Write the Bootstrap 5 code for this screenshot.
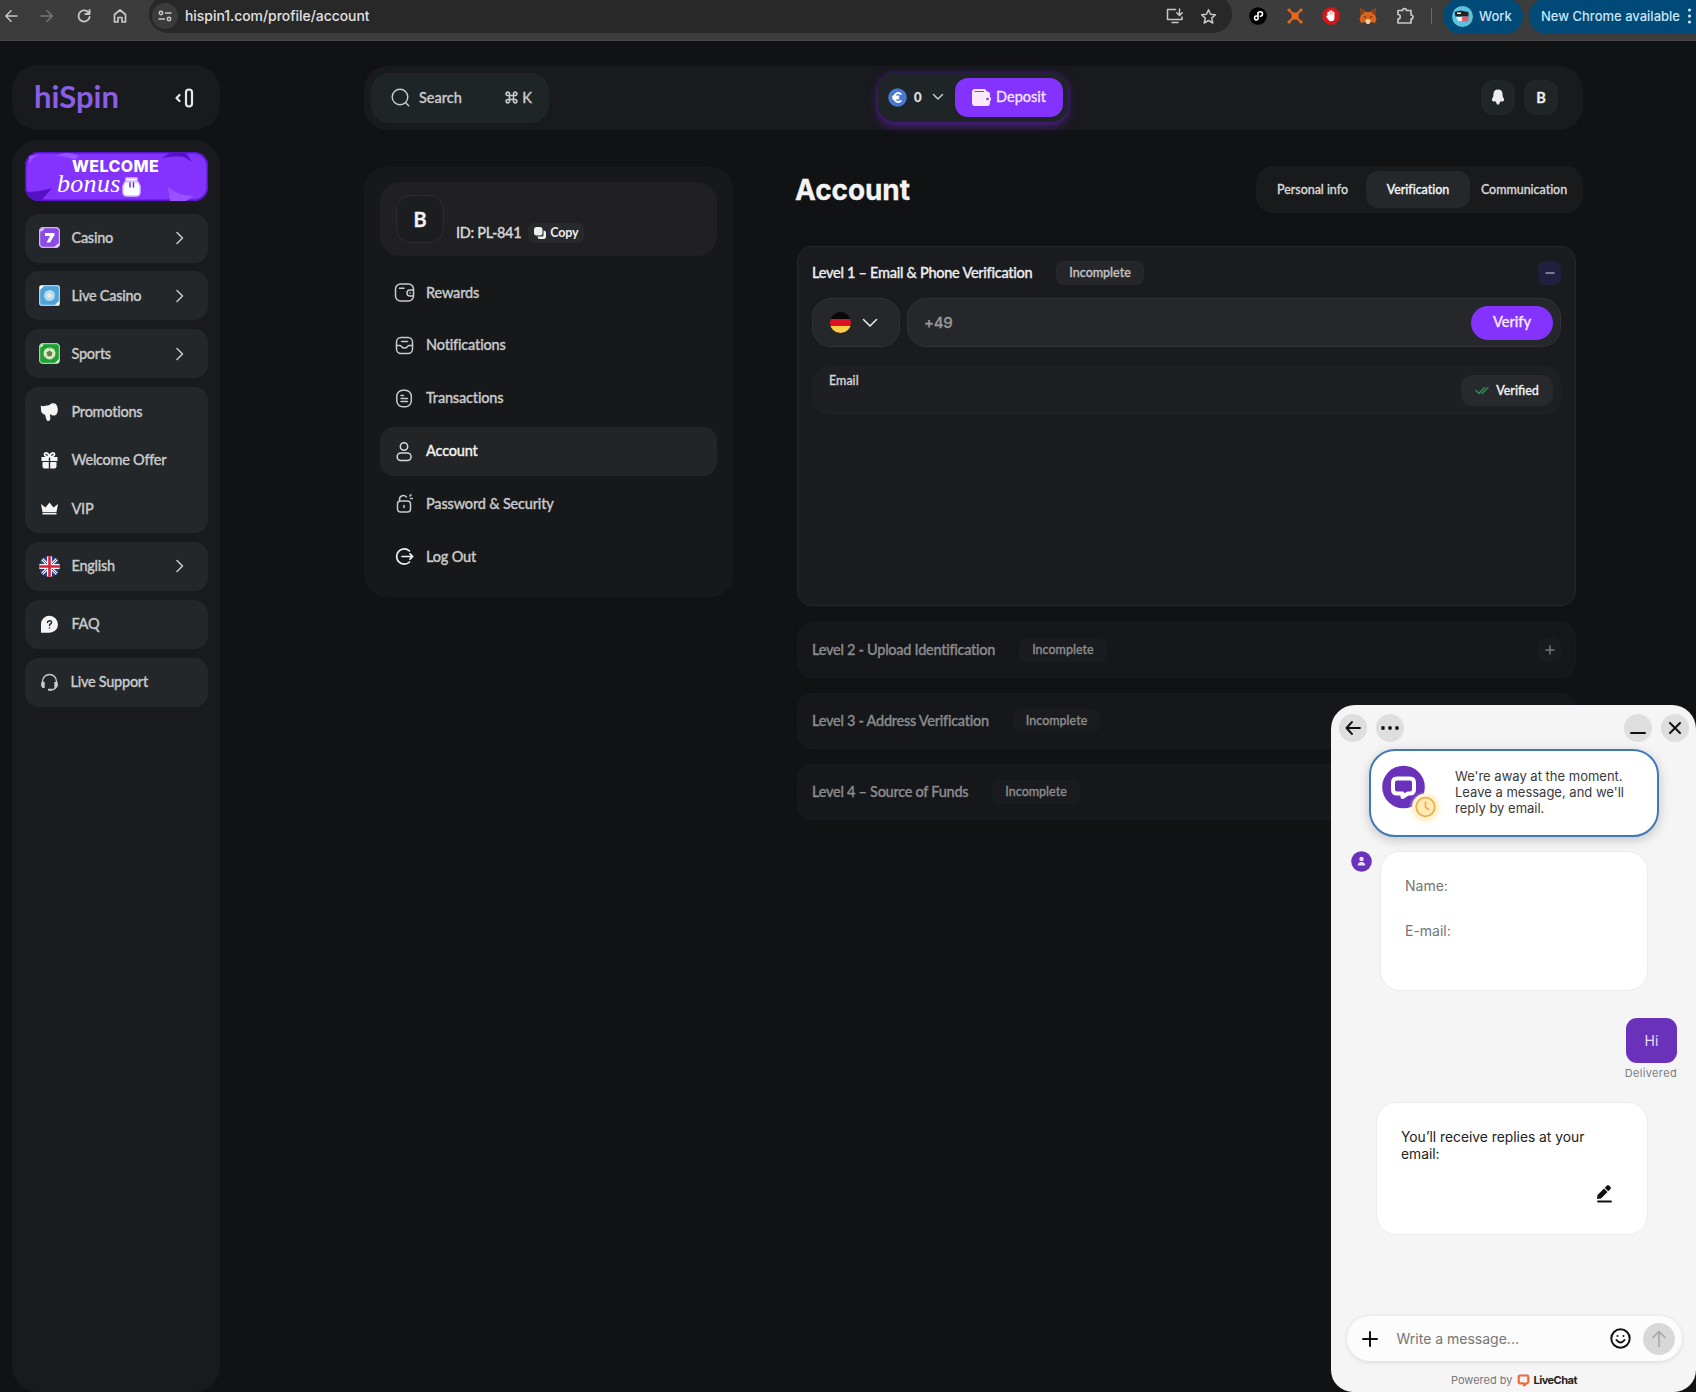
<!DOCTYPE html>
<html lang="en">
<head>
<meta charset="utf-8">
<title>hiSpin – Account</title>
<meta name="viewport" content="width=device-width, initial-scale=1">
<link href="https://cdn.jsdelivr.net/npm/bootstrap@5.3.0/dist/css/bootstrap.min.css" rel="stylesheet">
<style>
body{background:#101214;color:#c9cacb;font-family:Lato,"Noto Sans",sans-serif;font-size:14.5px;line-height:20px;font-weight:500;width:1696px;height:1392px;overflow:hidden;position:relative}
.side,main{letter-spacing:-.27px;-webkit-text-stroke:.3px}
svg{display:block;flex:none;fill:none;stroke-linecap:round;stroke-linejoin:round}
svg:not([stroke]){stroke:currentColor}
svg:not([stroke-width]){stroke-width:1.5}
svg .f{fill:currentColor;stroke:none}
/* browser bar */
.chrome{height:41px;background:#3c3c3c;border-bottom:1px solid #474747;font-family:Inter,sans-serif;font-size:13.9px;color:#c7c7c7;overflow:hidden;padding-bottom:8px}
.omni{width:1083px;height:38px;margin-top:-5px;padding-top:5px;background:#282828;border-radius:19px;margin-left:11px}
.site{width:26px;height:26px;border-radius:50%;background:#3b3b3b;margin-left:4px;display:grid;place-items:center}
.nav-ico{width:36.5px;display:grid;place-items:center}
.cpill{background:#004a77;color:#c9e6fb;height:36px;border-radius:18px;font-weight:500;font-size:13px}
/* side bar */
.side{width:208px;margin-left:12px}
.logo-box{height:65px;border-radius:26px;background:#191a1e;padding:0 26px 0 22px}
.logo-txt{font-size:31px;font-weight:700;letter-spacing:0;color:#8b5ee6;line-height:40px;padding-bottom:4px;-webkit-text-stroke:0}
.side-body{height:1252px;margin-top:10px;border-radius:26px;background:#191a1e;padding:12px 12px 0 13px}
.promo{height:49px;border-radius:14px;background:#8433ff;position:relative;overflow:hidden;box-shadow:inset 0 0 0 1.5px #5b11d0;margin-bottom:12.5px;-webkit-text-stroke:0}
.promo svg{position:absolute;left:0;top:0}
.promo b{position:absolute;left:47px;top:6px;color:#fff;font:800 16px/16px Inter,sans-serif;letter-spacing:.4px}
.promo i{position:absolute;left:32px;top:20px;color:#fff;font:italic 26px/24px "Liberation Serif",serif;letter-spacing:.3px}
.sitem{height:49px;background:#23272a;border-radius:14px;margin-bottom:8.9px;padding-left:13.5px}
.sitem.multi{height:146px}
.srow{height:48.7px;display:flex;align-items:center}
.srow svg:first-child{margin-right:12px;width:21px;height:21px;color:#f4f4f4}
.srow .chev{margin-left:auto;margin-right:24.5px}
/* header */
.topbar{width:1219px;height:64px;border-radius:24px;background:#191a1e;padding:0 25px 1px 7px;margin-top:25px;letter-spacing:0}
.search{width:178px;height:50px;border-radius:18px;background:#1f2427;padding:0 17px 0 20px}
.wallet{width:190px;height:49px;border-radius:17px;background:#1f2427;padding:0 5px 1px 10px;margin-left:329px;box-shadow:0 4px 9px 1px #552099aa,0 0 4px #3a1a70}
.deposit{width:108px;height:39px;border-radius:13px;background:#8433ff;color:#f6e9ff;padding:0}
.deposit:hover{background:#8433ff;color:#f6e9ff}
.sq{width:34px;height:35px;border-radius:12px;background:#202528;color:#eceded;font-weight:700;display:grid;place-items:center}
/* profile column */
.prof{width:369px;height:430px;background:#17181a;border-radius:22px;padding:15px 16px;margin-top:37px;letter-spacing:-.18px}
.who{height:74px;border-radius:20px;background:#202022;padding:0 16px;margin-bottom:12px}
.ava{width:48px;height:48px;border:1px solid #2d2e30;border-radius:15px;background:#1c1d1f;color:#f1f1f1;font:700 20px/1 Lato,sans-serif;display:grid;place-items:center}
.copy{height:20px;border-radius:6px;background:#28292b;color:#eee;font-size:12.5px;font-weight:700;padding:0 6px;margin-left:7px;-webkit-text-stroke:0}
.mi{height:49px;margin-bottom:3.85px;border-radius:14px;padding-left:14px}
.mi svg{width:21px;height:21px;margin-right:11px}
.mi.on{background:#232426;color:#f1f1f1}
/* account column */
.acct{width:787px;margin-left:63px;margin-top:36px}
.ttl{font:700 28px/34px Inter,sans-serif;color:#f3f3f4;letter-spacing:-.1px;margin:0}
.tabs{width:327px;height:47px;border-radius:17px;background:#181a1c;font-size:12.5px;color:#d6d6d7;letter-spacing:-.05px}
.tabs .on{width:104px;height:37px;border-radius:12px;background:#24282b;color:#f4f4f4;display:grid;place-items:center;margin:0 11px 0 18px}
.lvl{width:779px;height:56px;border:1px solid #191a1c;border-radius:15px;background:#15171a;margin:0 0 15px 1px;padding:0 14px;color:#8b8c8d}
.lvl.open{height:360px;background:#1a1b1f;border-color:#26272b;color:#eee;margin:33px 0 16px 1px}
.lhead{height:54px}
.tag{font-size:12.5px;height:24px;border-radius:7px;background:#1a1b1e;padding:0 13px;margin-left:24px;display:grid;place-items:center;letter-spacing:0}
.open .tag{background:#25262a;color:#c2c3c4}
.pm{width:23px;height:24px;border-radius:7px;display:grid;place-items:center;margin-left:auto;color:#77787a;background:#1a1b1e}
.open .pm{background:#201f3d;color:#9a96c6}
.fld{height:49px;border-radius:19px;background:#26272a;border:1px solid #303134}
.verify{width:82px;height:34px;border-radius:17px;background:#8433ff;color:#fae8ff;font:500 14.5px/1 Lato,sans-serif;padding:0}
.mail{height:49px;border-radius:16px;background:#1e1f22;margin-top:19px;padding:0 8px 0 17px}
.okk{width:92px;height:31px;border-radius:11px;background:#28292c;color:#f2f2f2;font-size:12.5px;letter-spacing:0}
/* chat window */
.chat{position:absolute;left:1331px;top:705px;width:365px;height:687px;border-radius:24px 24px 22px 22px;background:#f5f5f6;font-family:Inter,sans-serif;font-weight:400;color:#222;padding:9px 7px 0 8px;font-size:14px}
.rnd{width:28px;height:28px;border-radius:50%;background:#dedede;color:#111;display:grid;place-items:center}
.away{width:290px;height:88px;margin:7px 0 0 30px;border:2px solid #4079b8;border-radius:26px;background:#fff;box-shadow:0 3px 12px #0003;font-size:13px;line-height:15.8px;color:#3a3a3a;padding-left:11px}
.wcard{background:#fff;border-radius:20px;border:1px solid #ececec}
.hi{width:51px;height:45px;border-radius:11px;background:#6a32bb;color:#e9dcfb;display:grid;place-items:center}
.compose{width:335px;height:45px;border-radius:23px;background:#fcfcfc;box-shadow:0 1px 5px #0000001f;color:#757575;margin-left:7.5px;padding:0 7px 0 15px}
</style>
</head>
<body>
<div class="chrome d-flex align-items-center">
  <div class="nav-ico" style="width:22px"><svg width="16" height="16" viewBox="0 0 16 16"><path d="M14 8H3M8 2.8 2.8 8 8 13.2"/></svg></div>
  <div class="nav-ico ms-1" style="color:#777;width:41px"><svg width="16" height="16" viewBox="0 0 16 16"><path d="M2 8h11M8 2.8 13.2 8 8 13.2"/></svg></div>
  <div class="nav-ico" style="width:34px"><svg width="16" height="16" viewBox="0 0 16 16" stroke-width="1.800"><path d="M13 5.2A5.600 5.600 0 1 0 13.600 9M13.600 2v4H9.400"/></svg></div>
  <div class="nav-ico" style="width:37px"><svg width="16" height="16" viewBox="0 0 16 16" stroke-width="1.700"><path d="M2.500 14V6.500L8 2l5.500 4.500V14H10V9.500H6V14z"/></svg></div>
  <div class="omni d-flex align-items-center">
    <div class="site" style="margin-left:3px"><svg width="14" height="14" viewBox="0 0 14 14"><circle cx="3" cy="4" r="1.700"/><path d="M7.500 4H13M1 10h5.500"/><circle cx="11" cy="10" r="1.700"/></svg></div>
    <span style="color:#e2e2e2;margin-left:7px">hispin1.com/profile/account</span>
    <svg class="ms-auto" width="18" height="16" viewBox="0 0 18 16"><path d="M9.500 1.500H1.500v10h14.500V9M6 14.500h6M13.500 1v6M10.800 4.800l2.700 2.700 2.700-2.700"/></svg>
    <svg style="margin:0 15px 0 16px" width="17" height="17" viewBox="0 0 17 17"><path d="m8.500 1.800 2 4.500 4.900.5-3.700 3.300 1.100 4.900-4.300-2.500-4.300 2.500 1.100-4.900L1.600 6.800l4.900-.5z"/></svg>
  </div>
  <svg style="margin-left:17px" width="18" height="18" viewBox="0 0 18 18" stroke="none"><circle cx="9" cy="9" r="8.800" fill="#000"/><path stroke="#fff" stroke-width="1.600" d="M6.800 13a2.200 2.200 0 0 1 0-4H8.500M9 5.500v5.800Q9 13 7 13M9 7Q9 4.800 11.300 4.800T13.500 7t-2.200 2.200"/></svg>
  <svg style="margin-left:20px" width="16" height="16" viewBox="0 0 16 16" color="#e8691b"><path class="f" d="M4.500 4.500h7v7h-7z"/><path stroke-width="2" d="M5 5 2 2M11 5l3-3M5 11l-3 3M11 11l3 3"/><path stroke-width="3.200" d="M2 2h.1M14 2h.1M2 14h.1M14 14h.1"/></svg>
  <svg style="margin-left:19px" width="18" height="18" viewBox="0 0 18 18" stroke="none"><path fill="#d3181b" d="M5.500 .5h7l5 5v7l-5 5h-7l-5-5v-7z"/><path stroke="#fff" stroke-width="1.500" fill="#fff" d="M6.200 9V5.500M8 8V4M9.900 8V4M11.700 9V5.500M6.200 8.500h5.500V11c0 1.500-1 2.500-2.700 2.500S6.500 12 5 9.500"/></svg>
  <svg style="margin-left:19px" width="18" height="18" viewBox="0 0 18 18" stroke="none"><path fill="#d9641c" d="m1 1 6 4h4l6-4-1 7 1.500 4-1.500 4-4-1-2 2H8l-2-2-4 1-1.500-4L2 8z"/><path fill="#8c3a12" d="m1 1 5 4-4 3zM17 1l-5 4 4 3z"/><path fill="#f5d0a6" d="m6 14 2-2h2l2 2-2 3H8z"/><path fill="#222" d="m4.500 9 3 1-1 1zM13.500 9l-3 1 1 1z"/></svg>
  <svg style="margin-left:19px" width="18" height="18" viewBox="0 0 18 18" stroke-width="1.700"><path d="M2 3.500h4.500a2 1.900 0 0 1 4 0H15V8a2 2 0 0 1 0 4v4H2v-4a2.200 2.200 0 0 0 0-4.500z"/></svg>
  <span style="width:1px;height:16px;background:#6b6b6b;margin:0 11px 0 17px"></span>
  <div class="cpill d-flex align-items-center" style="width:80px;padding-left:9px">
    <svg width="21" height="21" viewBox="0 0 21 21" stroke="none"><circle cx="10.500" cy="10.500" r="10.500" fill="#5cc3dd"/><path fill="#222" d="M2.500 6 8 4.500 16.500 6v4.500h-13z"/><path fill="#eee" d="M4 11h7l-1 4H6zM5 6.500h4V8H5z"/><path fill="#d86070" d="M10 10.500h7l-1 5h-6z"/></svg>
    <span style="margin-left:6px">Work</span></div>
  <div class="cpill d-flex align-items-center flex-fill text-nowrap" style="margin-left:6px;padding-left:12px;border-radius:18px 0 0 18px">New Chrome available
    <svg class="ms-auto" style="margin-right:4px" width="5" height="16" viewBox="0 0 5 16"><circle class="f" cx="2.500" cy="2" r="1.600"/><circle class="f" cx="2.500" cy="8" r="1.600"/><circle class="f" cx="2.500" cy="14" r="1.600"/></svg></div>
</div>

<div class="d-flex align-items-start">
  <aside class="side" style="margin-top:24px">
    <div class="logo-box d-flex align-items-center justify-content-between">
      <span class="logo-txt">hiSpin</span>
      <svg width="19" height="20" viewBox="0 0 19 20" stroke="#e8e8e8" stroke-width="2.200"><path d="M4.500 7 1.500 10l3 3"/><rect x="11" y="1.500" width="6" height="17" rx="3"/></svg>
    </div>
    <div class="side-body">
      <div class="promo"><svg width="183" height="49" viewBox="0 0 183 49" stroke="none"><path fill="#5512c4" d="M0 40q15 0 27-4L16 49H0zM137 6q10-8 24-5l6 9-8-5q-8-2-22 1z"/><path fill="#9a52ff" d="M30 4q12-6 24 0l-4 4q-8-4-20-4zM143 35q10 9 26 9l-8 5h-16zM4 12Q8 4 16 2L4 4z"/><path fill="#fff" stroke="#d9c0ff" d="M100 30h13l2 4v6q0 4-4 4h-9q-4 0-4-4v-6zM101 26h11v3h-11z"/><path stroke="#6a2bd0" stroke-width="1.500" d="M105 31v4M108.500 31v4"/></svg><b>WELCOME</b><i>bonus</i></div>
      <div class="sitem"><div class="srow"><svg viewBox="0 0 21 21" stroke="none"><rect x=".5" y=".5" width="20" height="20" rx="4" fill="#8a4be6" stroke="#d3b3f8"/><path d="M1.500 5V3q0-1.500 1.500-1.500h3zM20 16v2q0 2-2 2h-3z" fill="#e9d8ff"/><path d="M6 6h9.500v2l-4.500 7.500H7.500L11 9H6z" fill="#fff"/></svg>Casino<svg class="chev" width="8" height="14" viewBox="0 0 8 14"><path d="m1 1.500 5.500 5.500L1 12.500"/></svg></div></div>
      <div class="sitem"><div class="srow"><svg viewBox="0 0 21 21" stroke="none"><rect x=".5" y=".5" width="20" height="20" rx="3" fill="#4fa3da" stroke="#9fd2f2"/><path d="M1 5V1h4zM20 16v4h-4z" fill="#fff"/><circle cx="10.500" cy="10.500" r="5.500" fill="#b5daf0"/><circle cx="10.500" cy="10.500" r="2.500" fill="#f0e9d8"/></svg>Live Casino<svg class="chev" width="8" height="14" viewBox="0 0 8 14"><path d="m1 1.500 5.500 5.500L1 12.500"/></svg></div></div>
      <div class="sitem"><div class="srow"><svg viewBox="0 0 21 21" stroke="none"><rect x=".5" y=".5" width="20" height="20" rx="4" fill="#20a035" stroke="#8bdc97"/><path d="M1.500 5V1.500H5zM20 16v4h-4z" fill="#d9ffdf"/><circle cx="10.500" cy="10.500" r="6" fill="#d8ecc4"/><path d="m10.500 7.500 3 2.200-1.200 3.500H8.700L7.500 9.700z" fill="#6a7a45"/><path fill="#7cab6b" d="M9 4.700h3l-1.500 1.500zM5 13l2 1 .5 2zM16 13l-2 1-.5 2z"/></svg>Sports<svg class="chev" width="8" height="14" viewBox="0 0 8 14"><path d="m1 1.500 5.500 5.500L1 12.500"/></svg></div></div>
      <div class="sitem multi">
        <div class="srow"><svg viewBox="0 0 21 21"><path class="f" d="M8 4.500C11 4.500 11.500 2 14 2.200c3-.5 4.800 2.800 4.800 6.300S17.500 14.800 14.500 14.500c-1.500 0-2.300-1-3.500-1.300l.3 4.300a2 2 0 0 1-4 .8L6 13.500C3.500 13.500 2 11 2 9l-.2-4.500 2 .8z"/></svg>Promotions</div>
        <div class="srow"><svg viewBox="0 0 21 21"><path class="f" d="M2.500 7h7.300v4H2.500zM11.200 7h7.300v4h-7.300zM3.500 12h6.300v6.500H5.500a2 2 0 0 1-2-2zM11.200 12h6.300v4.500a2 2 0 0 1-2 2h-4.300z"/><path stroke-width="1.800" d="M10.500 6.500C8 7 5.500 6 5.500 4.200S9 2 10.500 6.500C12 2 15.500 2.400 15.500 4.200S13 7 10.500 6.500"/></svg>Welcome Offer</div>
        <div class="srow"><svg viewBox="0 0 21 21"><path class="f" d="m2 6 4.500 3.500 4-5 4 5L19 6l-1.500 8h-14zM3.500 14.800h14v1.700h-14z"/></svg>VIP</div>
      </div>
      <div class="sitem"><div class="srow"><svg viewBox="0 0 21 21" stroke="none"><clipPath id="uk"><circle cx="10.500" cy="10.500" r="10.500"/></clipPath><g clip-path="url(#uk)"><path fill="#263c8e" d="M0 0h21v21H0z"/><path stroke="#f1f1f8" stroke-width="3" d="m0 0 21 21M21 0 0 21"/><path stroke="#c8334c" stroke-width="1" d="m0 0 21 21M21 0 0 21"/><path stroke="#f4f4f8" stroke-width="5" d="M10.500 0v21M0 10.500h21"/><path stroke="#d5233d" stroke-width="2.600" d="M10.500 0v21M0 10.500h21"/></g></svg>English<svg class="chev" width="8" height="14" viewBox="0 0 8 14"><path d="m1 1.500 5.500 5.500L1 12.500"/></svg></div></div>
      <div class="sitem"><div class="srow"><svg viewBox="0 0 21 21"><path class="f" d="M2 18.800V10a8.500 8.500 0 1 1 8.500 8.800z"/><path stroke="#23272a" stroke-width="1.500" d="M8.500 8.500c.2-2.600 4.200-2.300 4 0-.1 1.400-2 1.500-2 3M10.500 14v.1"/></svg>FAQ</div></div>
      <div class="sitem"><div class="srow"><svg viewBox="0 0 21 21" style="color:#c9cacb;margin-right:11px"><path stroke-width="1.400" d="M3.500 11V9.500a7 7 0 0 1 14 0V13c0 3-2 4.500-5 4.700"/><path class="f" d="M2.500 10h3.200v6H4q-2-1-2-3.500zM18.500 10h-3.200v6H17q2-1 2-3.500zM9 16.700h4v2H9z"/></svg>Live Support</div></div>
    </div>
  </aside>

  <main style="margin-left:144px">
    <header class="topbar d-flex align-items-center">
      <div class="search d-flex align-items-center"><svg width="19" height="19" viewBox="0 0 19 19" stroke-width="1.400"><circle cx="9" cy="9" r="7.800"/><path d="m14.700 14.700 3 3"/></svg><span style="margin-left:9px">Search</span>
        <svg class="ms-auto" width="13" height="13" viewBox="0 0 13 13" stroke-width="1.600"><path d="M4.500 4.500h4v4h-4zM4.500 4.500H3a1.700 1.700 0 1 1 1.500-1.500zM8.500 4.500V3A1.700 1.700 0 1 1 10 4.500zM8.500 8.500H10A1.700 1.700 0 1 1 8.500 10zM4.500 8.500V10A1.700 1.700 0 1 1 3 8.500z"/></svg><span style="margin-left:4px">K</span></div>
      <div class="wallet d-flex align-items-center">
        <svg width="19" height="19" viewBox="0 0 19 19" stroke="none"><circle cx="9.500" cy="9.500" r="9.300" fill="#4779d2"/><path stroke="#fff" stroke-width="1.800" d="M12.800 6A4.300 4.300 0 1 0 12.800 13M5 8.500h5.500M5 10.500h5.500"/></svg>
        <span style="margin-left:7px;font-weight:700;font-size:13px;color:#e0e0e0">0</span>
        <svg style="margin-left:10px" width="12" height="8" viewBox="0 0 12 8"><path d="m1.500 1.500 4.500 4.500 4.500-4.500"/></svg>
        <button class="btn deposit d-flex align-items-center justify-content-center ms-auto border-0" style="font-size:14.500px"><svg width="19" height="17" viewBox="0 0 19 17" stroke="none"><path fill="#fbeaff" d="M0 3a3 3 0 0 1 3-3h9q2.500 0 2.500 2.500h.5q3 0 3 3v8.500a3 3 0 0 1-3 3H3a3 3 0 0 1-3-3z"/><path fill="#8433ff" d="M2.500 2h9.500v1H2.500z"/><circle cx="16.500" cy="10" r="2.500" fill="#fbeaff"/><circle cx="15.500" cy="10" r="1.300" fill="#8433ff"/></svg><span style="margin-left:5px">Deposit</span></button>
      </div>
      <div class="sq ms-auto"><svg width="14" height="17" viewBox="0 0 14 17"><path class="f" d="M7 .5c3 0 4.500 2 4.500 4.500 0 2 .3 3 1.300 4.500.8 1.500.2 3-1.800 3H9.200L8 15.500H6l-1.200-3H3c-2 0-2.600-1.500-1.800-3C2.200 8 2.500 7 2.500 5 2.500 2.500 4 .5 7 .5z"/></svg></div>
      <div class="sq" style="margin-left:9px">B</div>
    </header>

    <div class="d-flex align-items-start">
      <section class="prof">
        <div class="who d-flex align-items-center"><div class="ava">B</div>
          <div class="d-flex align-items-center" style="margin:28px 0 0 12px;color:#d7d7d8"><span style="letter-spacing:-.3px">ID: PL-841</span>
            <span class="copy d-flex align-items-center"><svg width="12" height="12" viewBox="0 0 12 12"><rect class="f" width="8.500" height="8.500" rx="2.500"/><path class="f" d="M9.500 3.500q2.500 0 2.500 2.300V9.500q0 2.500-2.500 2.500H6q-2.500 0-2.500-2.500H8q1.500 0 1.500-1.500z"/></svg><span class="ms-1">Copy</span></span></div></div>
        <div class="mi d-flex align-items-center"><svg viewBox="0 0 21 21"><rect x="1.500" y="2" width="18" height="17" rx="5"/><path d="M5.500 6.200H10M19.500 8H16a3 3 0 0 0 0 6h3.500M16 11h.2"/></svg>Rewards</div>
        <div class="mi d-flex align-items-center"><svg viewBox="0 0 21 21"><rect x="2.500" y="2.500" width="16" height="16" rx="4.500"/><path d="M2.500 10.500H6c1.500 0 1.500 2.500 4.500 2.500s3-2.500 4.500-2.500h3.500M7.500 6.500h6"/></svg>Notifications</div>
        <div class="mi d-flex align-items-center"><svg viewBox="0 0 21 21"><rect x="2.800" y="2.300" width="14.500" height="16.500" rx="6"/><path d="M7 7.500h2.500M7 10.500h6.500M7 13.500h6.500"/></svg>Transactions</div>
        <div class="mi on d-flex align-items-center"><svg viewBox="0 0 21 21" stroke="#d8d8d8"><circle cx="10" cy="5.500" r="3.700"/><rect x="3.200" y="12" width="13.800" height="7.500" rx="3.500"/></svg>Account</div>
        <div class="mi d-flex align-items-center"><svg viewBox="0 0 21 21"><rect x="3.500" y="8" width="13" height="11" rx="3"/><path d="M5.500 8V6.500C5.500 2.500 10 1.500 12.500 4M10 12.500v2M16 3l1-1.200M16.500 5.500h1.800"/></svg>Password &amp; Security</div>
        <div class="mi d-flex align-items-center"><svg viewBox="0 0 21 21" stroke="#f2f2f2" stroke-width="1.700"><path d="M15.500 5A7.600 7.600 0 1 0 15.500 16M8 10.500h10.500M16 7.800l2.700 2.700L16 13.200"/></svg>Log Out</div>
      </section>

      <section class="acct">
        <div class="d-flex justify-content-between align-items-center" style="margin-left:-1px">
          <h1 class="ttl">Account</h1>
          <div class="tabs d-flex align-items-center"><span style="margin-left:21px">Personal info</span><span class="on">Verification</span><span>Communication</span></div>
        </div>
        <div class="lvl open">
          <div class="lhead d-flex align-items-center" style="height:51px"><span>Level 1 – Email &amp; Phone Verification</span><span class="tag">Incomplete</span><span class="pm"><svg width="10" height="10" viewBox="0 0 10 10"><path d="M1 5h8"/></svg></span></div>
          <div class="d-flex">
            <div class="fld d-flex align-items-center" style="width:88px;padding-left:17px"><svg width="21" height="21" viewBox="0 0 21 21" stroke="none"><clipPath id="de"><circle cx="10.500" cy="10.500" r="10.500"/></clipPath><g clip-path="url(#de)"><path fill="#080808" d="M0 0h21v7H0z"/><path fill="#dc1226" d="M0 7h21v7H0z"/><path fill="#f8cf46" d="M0 14h21v7H0z"/></g></svg><svg style="margin-left:11px" width="16" height="10" viewBox="0 0 16 10"><path d="m1.500 1.500 6.500 6.500 6.500-6.500"/></svg></div>
            <div class="fld d-flex align-items-center flex-fill" style="margin-left:7px;padding:0 7px 0 16px;font-family:Inter,sans-serif;font-size:15px;color:#98999a"><span>+49</span><button class="btn verify border-0 ms-auto">Verify</button></div>
          </div>
          <div class="mail d-flex align-items-center"><span style="font-size:12.500px;margin-bottom:20px;color:#d2d2d3;letter-spacing:0">Email</span><span class="okk ms-auto d-flex align-items-center justify-content-center"><svg width="14" height="9" viewBox="0 0 14 9" stroke="#2f8a50" stroke-width="1.600"><path d="m1 4.500 3 3L9.500 1.500M7 7.500 13 1.500"/></svg><span style="margin-left:7px">Verified</span></span></div>
        </div>
        <div class="lvl"><div class="lhead d-flex align-items-center"><span>Level 2 - Upload Identification</span><span class="tag">Incomplete</span><span class="pm"><svg width="10" height="10" viewBox="0 0 10 10"><path d="M1 5h8M5 1v8"/></svg></span></div></div>
        <div class="lvl"><div class="lhead d-flex align-items-center"><span>Level 3 - Address Verification</span><span class="tag">Incomplete</span></div></div>
        <div class="lvl"><div class="lhead d-flex align-items-center"><span>Level 4 – Source of Funds</span><span class="tag">Incomplete</span></div></div>
      </section>
    </div>
  </main>
</div>

<div class="chat">
  <div class="d-flex">
    <span class="rnd"><svg width="16" height="16" viewBox="0 0 16 16" stroke-width="1.900"><path d="M15 8H1.500M7 2 1.500 8 7 14"/></svg></span>
    <span class="rnd" style="margin-left:9px"><svg width="18" height="4" viewBox="0 0 18 4"><circle class="f" cx="2" cy="2" r="1.900"/><circle class="f" cx="9" cy="2" r="1.900"/><circle class="f" cx="16" cy="2" r="1.900"/></svg></span>
    <span class="rnd ms-auto"><svg width="16" height="12" viewBox="0 0 16 12" stroke-width="2"><path d="M1 11h14"/></svg></span>
    <span class="rnd" style="margin-left:9px"><svg width="12" height="12" viewBox="0 0 12 12" stroke-width="2"><path d="m1 1 10 10M11 1 1 11"/></svg></span>
  </div>
  <div class="away d-flex align-items-center">
    <svg width="66" height="66" viewBox="0 0 66 66" stroke="none"><defs><radialGradient id="glow"><stop offset=".5" stop-color="#ffe08a" stop-opacity=".9"/><stop offset="1" stop-color="#fff0c0" stop-opacity="0"/></radialGradient></defs><circle cx="21.500" cy="27" r="21.300" fill="#6a32bb"/><path stroke="#fff" stroke-width="4" d="M15 18.500h13q4 0 4 4v7q0 4-4 4h-2L20.500 37v-3.500H15q-4 0-4-4v-7q0-4 4-4z"/><circle cx="43.500" cy="48" r="17" fill="url(#glow)"/><circle cx="43.500" cy="47" r="13.500" fill="#fff3d6"/><circle cx="43.500" cy="47" r="9.300" fill="#ffeab5" stroke="#e9b04a" stroke-width="1.800"/><path stroke="#e9b04a" stroke-width="1.600" d="M43.500 42v5.500l3.500 2"/></svg>
    <span style="margin-left:7px">We're away at the moment.<br>Leave a message, and we'll<br>reply by email.</span>
  </div>
  <div class="d-flex" style="margin:14px 0 0 12px">
    <svg class="mt-0" width="21" height="21" viewBox="0 0 21 21" stroke="none"><circle cx="10.500" cy="10.500" r="10.300" fill="#6a32bb"/><circle cx="10.500" cy="8" r="2.200" fill="#eee0ff"/><path fill="#eee0ff" d="M6.800 14.500q0-3.500 3.700-3.500t3.700 3.500z"/></svg>
    <div class="wcard d-flex flex-column" style="width:268px;height:140px;margin-left:8px;padding:24px 24px;color:#757575;gap:25px"><span>Name:</span><span>E-mail:</span></div>
  </div>
  <div class="d-flex flex-column align-items-end" style="margin:27px 12px 0 0"><div class="hi">Hi</div><span style="font-size:11px;letter-spacing:.35px;line-height:20px;color:#7c7c7c">Delivered</span></div>
  <div class="wcard" style="width:272px;height:133px;margin:19px 0 0 37px;padding:25.500px 24px 0;line-height:17px;font-size:13.800px">You’ll receive replies at your<br>email:
    <svg style="margin:21px 0 0 195px" width="16" height="19" viewBox="0 0 16 19" stroke="none"><path fill="#111" d="m1 15 .5-4L8 4.500l3.500 3.500-6.500 6.500zM8.700 3.800 11 1.500q1-1 2 0l1.500 1.500q1 1 0 2l-2.300 2.300z"/><path stroke="#111" stroke-width="1.800" d="M2 17.500h13"/></svg></div>
  <div class="compose d-flex align-items-center" style="margin-top:81px">
    <svg width="16" height="16" viewBox="0 0 16 16" stroke="#111" stroke-width="2"><path d="M8 1v14M1 8h14"/></svg><span style="margin-left:19px">Write a message...</span>
    <svg class="ms-auto" width="21" height="21" viewBox="0 0 21 21" stroke="#111" stroke-width="2"><circle cx="10.500" cy="10.500" r="9.200"/><path d="M6.500 12q4 5 8 0M7.500 8v.1M13.500 8v.1"/></svg>
    <svg style="margin-left:12px" width="32" height="32" viewBox="0 0 32 32" stroke="none"><circle cx="16" cy="16" r="16" fill="#d8d8d8"/><path stroke="#a5a5a5" stroke-width="1.500" d="M16 23.500V9M10 14.500 16 8.500l6 6"/></svg></div>
  <div class="d-flex align-items-center justify-content-center" style="margin-top:9px;font-size:11px;color:#777"><span>Powered by</span><svg style="margin:0 3px 0 5px" width="13" height="13" viewBox="0 0 12 13" stroke="#f06a35" stroke-width="2.200"><path d="M2.500 1.500h7q1.300 0 1.300 1.300v5q0 1.300-1.300 1.300L6.500 11.500V9.300h-4q-1.300 0-1.300-1.300V2.800q0-1.300 1.300-1.300z"/></svg><b style="color:#222;letter-spacing:-.5px">LiveChat</b></div>
</div>
<script src="https://cdn.jsdelivr.net/npm/bootstrap@5.3.0/dist/js/bootstrap.bundle.min.js"></script>
</body>
</html>
